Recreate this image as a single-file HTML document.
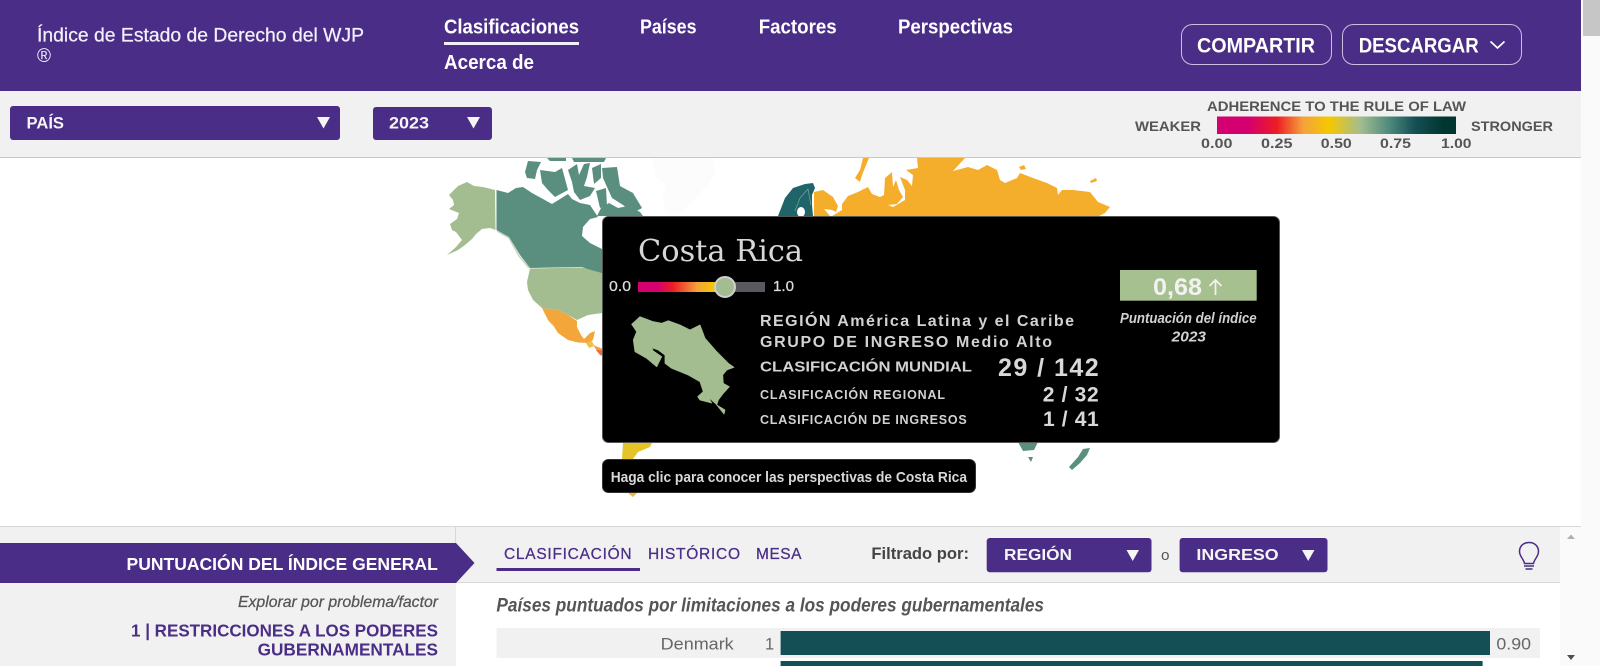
<!DOCTYPE html>
<html lang="es">
<head>
<meta charset="utf-8">
<title>Índice de Estado de Derecho del WJP</title>
<style>
html,body{margin:0;padding:0;background:#fff;overflow:hidden;width:1600px;height:666px}
svg{display:block}
text{font-family:"Liberation Sans",sans-serif}
.m{stroke:currentColor;stroke-width:.5px}
.s{stroke:currentColor;stroke-width:.25px}
.serif{font-family:"DejaVu Serif",serif}
</style>
</head>
<body>
<svg xmlns="http://www.w3.org/2000/svg" width="1600" height="666" viewBox="0 0 1600 666">
<defs>
<linearGradient id="lg"><stop offset="0" stop-color="#d4006f"/><stop offset=".13" stop-color="#d4006f"/><stop offset=".25" stop-color="#ee1c25"/><stop offset=".36" stop-color="#f4a23c"/><stop offset=".47" stop-color="#f5c800"/><stop offset=".6" stop-color="#a3bd90"/><stop offset=".72" stop-color="#4f8a7c"/><stop offset=".83" stop-color="#134f55"/><stop offset=".95" stop-color="#003530"/><stop offset="1" stop-color="#003530"/></linearGradient>
<linearGradient id="sl"><stop offset="0" stop-color="#d4006f"/><stop offset=".22" stop-color="#d4006f"/><stop offset=".4" stop-color="#ee1c25"/><stop offset=".68" stop-color="#f4a23c"/><stop offset=".88" stop-color="#f5c800"/><stop offset="1" stop-color="#e0c840"/></linearGradient>
</defs>

<!-- page base and scrollbar -->
<rect width="1600" height="666" fill="#fff"/>
<rect x="1581" width="19" height="666" fill="#fafafa"/>
<rect x="1583" width="17" height="36" fill="#c6c6c6"/>

<!-- header -->
<rect width="1581" height="91" fill="#4a2d87"/>
<g fill="#f3effa" color="#f3effa">
<text class="s" x="37" y="41.5" font-size="19" textLength="327" lengthAdjust="spacingAndGlyphs">Índice de Estado de Derecho del WJP</text>
<text x="37" y="62" font-size="19">®</text>
</g>
<g fill="#fff" font-size="20" font-weight="bold">
<text x="444" y="33.5" textLength="135" lengthAdjust="spacingAndGlyphs">Clasificaciones</text>
<rect x="444" y="42" width="135" height="3" fill="#f3effa"/>
<text x="444" y="69" textLength="90" lengthAdjust="spacingAndGlyphs">Acerca de</text>
<text x="640" y="33.5" textLength="56.5" lengthAdjust="spacingAndGlyphs">Países</text>
<text x="758.7" y="33.5" textLength="78" lengthAdjust="spacingAndGlyphs">Factores</text>
<text x="898" y="33.5" textLength="115" lengthAdjust="spacingAndGlyphs">Perspectivas</text>
</g>
<rect x="1181.5" y="24.5" width="150" height="40" rx="11" fill="none" stroke="#cbbfe0"/>
<rect x="1342.5" y="24.5" width="179" height="40" rx="11" fill="none" stroke="#cbbfe0"/>
<g fill="#fff" font-size="21" font-weight="bold">
<text x="1197" y="52.3" textLength="118" lengthAdjust="spacingAndGlyphs">COMPARTIR</text>
<text x="1358.7" y="52.3" textLength="120" lengthAdjust="spacingAndGlyphs">DESCARGAR</text>
</g>
<path d="M1490.5 41.5L1497.5 48L1504.5 41.5" fill="none" stroke="#fff" stroke-width="1.7"/>

<!-- filter row -->
<rect y="91" width="1581" height="66" fill="#f1f1f1"/>
<rect y="157" width="1581" height="1" fill="#c8c8c8"/>
<rect x="10" y="106" width="330" height="34" rx="3" fill="#4a2d87"/>
<rect x="373" y="107" width="119" height="33" rx="3" fill="#4a2d87"/>
<g fill="#f5f5f5" font-size="16.5" font-weight="bold">
<text x="26.5" y="128.3" textLength="37.5" lengthAdjust="spacingAndGlyphs">PAÍS</text>
<text x="389" y="128.3" textLength="40" lengthAdjust="spacingAndGlyphs">2023</text>
</g>
<path d="M317 117H330L323.500 128.500Z M467 117H480L473.500 128.500Z" fill="#f5f5f5"/>

<!-- legend -->
<g fill="#555" font-size="14" font-weight="bold">
<text x="1207" y="111" textLength="259" lengthAdjust="spacingAndGlyphs">ADHERENCE TO THE RULE OF LAW</text>
<text x="1135" y="131" textLength="66" lengthAdjust="spacingAndGlyphs">WEAKER</text>
<text x="1471" y="131" textLength="82" lengthAdjust="spacingAndGlyphs">STRONGER</text>
<text x="1201" y="148" textLength="31.500" lengthAdjust="spacingAndGlyphs">0.00</text>
<text x="1261" y="148" textLength="31.500" lengthAdjust="spacingAndGlyphs">0.25</text>
<text x="1320.800" y="148" textLength="31" lengthAdjust="spacingAndGlyphs">0.50</text>
<text x="1380" y="148" textLength="31" lengthAdjust="spacingAndGlyphs">0.75</text>
<text x="1441" y="148" textLength="30.500" lengthAdjust="spacingAndGlyphs">1.00</text>
</g>
<rect x="1217" y="116.500" width="239" height="17.500" fill="url(#lg)"/>

<!-- map -->
<g>
<!-- Greenland -->
<path d="M653 158H712L716 172L708 185L700 192L692 203L678 216L666 212L662 198L666 186L656 176Z" fill="#fcfcfc"/>
<!-- Alaska -->
<path d="M449 195L458 186L467 182L474 186L483 187L495 190L495.500 230L490 228L482 229L476 234L472 239L465 245L458 250L447 255L456 247L462 240L456 232L452 230L450 224L457 219L459 213L449 209L454 205L453 200Z" fill="#a3bd90"/>
<path d="M497 231L509 238L519 256L529 268" fill="none" stroke="#c7d8bb" stroke-width="1.5"/>
<!-- Canada -->
<g fill="#5a8f80">
<path d="M496.500 190L508 193L516 188L523 187L532 193L543 199L552 204L560 199L568 194L572 199L580 203L590 205L598 217L590 219L583 227L582 236L590 243L602 249L612 250V275H602L582 267L530 268L520 255L509 237L496.500 230Z"/>
<path d="M525 172L528 161L541 162L537 170L535 179L527 178Z"/>
<path d="M540 170L555 172L562 168L568 190L555 197L548 190L542 183Z"/>
<path d="M568 170L577 164L579 175L584 164L590 163L587 177L584 186L595 188L590 196L580 200L574 192L572 182Z"/>
<path d="M592 168L601 164L601 178L594 184Z"/>
<path d="M602 168L617 167L620 186L633 193L642 208L633 213L623 205L612 198L607 187L603 178Z"/>
<path d="M596 191L606 188L607 206L600 208Z"/>
<path d="M597 216L601 208L609 203L618 208L628 206L640 212L643 216Z"/>
<path d="M547 158H566V161H550Z M572 158H606L604 162H574Z"/>
</g>
<!-- Mexico + Central America -->
<path d="M542 308L550 309L558 310L568 315L577 321L577 327L581 335L584 339L590 333L595 331L593 340L588 343L578 342.500L568 340L558 333L551 322L546 313Z" fill="#f3a63a"/>
<path d="M542 308L546 311L553 326L548 320Z" fill="#f3a63a"/>
<path d="M586 343L592 341L594 346L589 348Z" fill="#eec04a"/>
<path d="M593 345L603 349V353L597 351Z" fill="#f0a040"/>
<path d="M596 350L603 350V356L600 355Z" fill="#e8703a"/>
<!-- USA -->
<path d="M530 268.500L582 267.500L602 273L612 273V313H602L588 315L577 320L570 316L558 310L550 309L542 308L533 300L528 290L527 282Z" fill="#a3bd90"/>
<!-- Scandinavia -->
<path d="M778 216L785 198L793 188L805 184L813 183L815 188L812 195L812 205L813 216Z" fill="#1f6468"/>
<ellipse cx="801" cy="212" rx="4" ry="5" fill="#fff"/>
<path d="M808 189L800 198L795 211M808 189L811 205" fill="none" stroke="#7ba7a6" stroke-width=".7"/>
<!-- Russia -->
<g fill="#f4ae2c">
<path d="M814 192L823 190L833 197L838 206L836 212L832 210L824 209L830 216H814Z"/>
<path d="M832 216L842 210L842 204L848 196L858 192L868 187L872 194L880 197L884 195L885 178L892 172L893 187L896 180L899 190L903 197L897 204L888 205L893 207L905 200L905 190L900 177L907 180L912 186L913 175L906 170L918 168L917 158H965L953 171L968 167L978 170L987 165L997 170L1000 180L1005 183L1017 178L1020 173L1033 178L1047 183L1057 188L1058 195L1062 190L1073 190L1090 192L1098 202L1110 207L1105 213L1097 217Z"/>
<path d="M863 158H869L862 175L860 182L855 178L860 170Z"/>
<path d="M1090 181L1096 178L1097 181L1091 183Z"/>
<path d="M1019 167L1024 165L1026 169L1021 170Z"/>
</g>
<!-- South America bits -->
<path d="M623 443H652L650 447L638 452L633 459H622Z" fill="#e3c528"/>
<path d="M628 493H637L633 497Z" fill="#f0b84a"/>
<!-- Oceania -->
<g fill="#5a8f80">
<path d="M1018 442H1038L1034 450L1023 451Z"/>
<path d="M1028 457H1033L1031 462Z"/>
<path d="M1083 449L1090 448L1087 455L1080 463L1072 470L1069 467L1078 457Z"/>
</g>
</g>

<!-- main tooltip -->
<rect x="602.500" y="216.500" width="677" height="226" rx="6" fill="#000" stroke="#555"/>
<text class="serif" x="638" y="261" font-size="30" fill="#d6d6d6" textLength="165" lengthAdjust="spacingAndGlyphs">Costa Rica</text>
<g fill="#dcdcdc" color="#dcdcdc" font-size="14.500">
<text class="s" x="609" y="291" textLength="22" lengthAdjust="spacingAndGlyphs">0.0</text>
<text class="s" x="773" y="291" textLength="21" lengthAdjust="spacingAndGlyphs">1.0</text>
</g>
<rect x="725" y="282" width="40" height="10" fill="#59595f"/>
<rect x="638" y="282" width="87" height="10" fill="url(#sl)"/>
<circle cx="725" cy="287" r="10" fill="#a3bd90" stroke="#cfcfcf" stroke-width="2"/>
<path d="M631.700 324.300L640 316.700L653.300 321.700L661.700 323.300L668.300 320.700L680 325L690 330L700 325L705 338.300L716.700 351.700L728.300 363.300L734 367.300L726.700 370L722.700 375L723.300 383.300L729.300 386.700L723.300 393.300L718.300 400L716.700 405L725 410L724 414L716 404L708 397L711.700 403L700 400L697.700 396.700L703.300 391.700L700 381.700L688.300 375L671.700 368.300L665 363.300L665 355L658.300 350L651.700 347.700L653.300 351L661.700 356.700L656.700 366.700L646.700 358.300L635 351.700L633.300 340L636.700 331.700Z" fill="#a3bd90" stroke="#a3bd90" stroke-width=".8" stroke-linejoin="round"/>
<g fill="#d2d2d2" font-weight="bold">
<text x="760" y="326" font-size="16" textLength="314">REGIÓN América Latina y el Caribe</text>
<text x="760" y="347" font-size="16" textLength="292">GRUPO DE INGRESO Medio Alto</text>
<text x="760" y="371.700" font-size="15" textLength="212" lengthAdjust="spacingAndGlyphs">CLASIFICACIÓN MUNDIAL</text>
<text x="760" y="399" font-size="12.500" textLength="185">CLASIFICACIÓN REGIONAL</text>
<text x="760" y="424" font-size="12.500" textLength="206.700">CLASIFICACIÓN DE INGRESOS</text>
</g>
<g fill="#d8d8d8" font-weight="bold">
<text x="998" y="376" font-size="25" textLength="100.700">29 / 142</text>
<text x="1042.700" y="401.700" font-size="21" textLength="56">2 / 32</text>
<text x="1043" y="426" font-size="21" textLength="55.700">1 / 41</text>
</g>
<rect x="1120" y="270" width="136.700" height="30.700" fill="#a7c08f"/>
<text x="1153" y="295" font-size="24" font-weight="bold" fill="#f2f2f2" textLength="49" lengthAdjust="spacingAndGlyphs">0,68</text>
<path d="M1215.500 295V280M1209.500 286L1215.500 280L1221.500 286" fill="none" stroke="#f2f2f2" stroke-width="1.700"/>
<g fill="#d2d2d2" font-size="14.500" font-style="italic" font-weight="bold">
<text x="1120" y="323" textLength="136.600" lengthAdjust="spacingAndGlyphs">Puntuación del índice</text>
<text x="1171.700" y="341.700" textLength="34.300" lengthAdjust="spacingAndGlyphs">2023</text>
</g>

<!-- click hint -->
<rect x="602.500" y="459.500" width="373" height="33" rx="6" fill="#000" stroke="#333"/>
<text x="610.700" y="482" font-size="15" font-weight="bold" fill="#d8d8d8" textLength="356.300" lengthAdjust="spacingAndGlyphs">Haga clic para conocer las perspectivas de Costa Rica</text>

<!-- bottom left panel -->
<rect y="526" width="456" height="140" fill="#f1f1f1"/>
<rect y="526" width="1581" height="1" fill="#d8d8d8"/>

<!-- bottom right header -->
<rect x="456" y="527" width="1104" height="55" fill="#f1f1f1"/>
<rect x="456" y="582" width="1104" height="1" fill="#d8d8d8"/>
<rect x="455" y="527" width="1" height="16" fill="#d8d8d8"/>
<rect x="1560" y="527" width="21" height="139" fill="#fafafa"/>
<path d="M1567 539L1571 534.500L1575 539Z" fill="#b0b0b0"/>
<path d="M1567 655H1575L1571 660Z" fill="#505050"/>

<!-- section band -->
<path d="M0 543H456L474.500 563L456 583H0Z" fill="#4a2d87"/>
<text x="126.500" y="570" font-size="17.500" fill="#fff" font-weight="bold" textLength="311.300" lengthAdjust="spacingAndGlyphs">PUNTUACIÓN DEL ÍNDICE GENERAL</text>
<text class="s" x="238" y="607" font-size="16" font-style="italic" fill="#555" color="#555" textLength="200" lengthAdjust="spacingAndGlyphs">Explorar por problema/factor</text>
<g fill="#4a2d87" font-size="17.500" font-weight="bold">
<text x="131" y="636.700" textLength="307" lengthAdjust="spacingAndGlyphs">1 | RESTRICCIONES A LOS PODERES</text>
<text x="257.600" y="655.700" textLength="180.400" lengthAdjust="spacingAndGlyphs">GUBERNAMENTALES</text>
</g>

<g fill="#4a2d87" color="#4a2d87" font-size="15.500">
<text class="s" x="504" y="559" textLength="127.600">CLASIFICACIÓN</text>
<text class="s" x="648" y="559" textLength="92">HISTÓRICO</text>
<text class="s" x="756" y="559" textLength="45.500">MESA</text>
</g>
<rect x="496.500" y="568" width="143.500" height="3" fill="#4a2d87"/>
<text x="871.400" y="559" font-size="16.500" font-weight="bold" fill="#444" textLength="97.600" lengthAdjust="spacingAndGlyphs">Filtrado por:</text>
<rect x="986.700" y="538" width="164.800" height="34.300" rx="3" fill="#4a2d87"/>
<rect x="1179.600" y="538" width="147.900" height="34.300" rx="3" fill="#4a2d87"/>
<g fill="#f5f5f5" font-size="16" font-weight="bold">
<text x="1004" y="560" textLength="68" lengthAdjust="spacingAndGlyphs">REGIÓN</text>
<text x="1196.400" y="560" textLength="82.200" lengthAdjust="spacingAndGlyphs">INGRESO</text>
</g>
<path d="M1126.500 550H1139L1132.700 561Z M1302 550H1314.500L1308.200 561Z" fill="#f5f5f5"/>
<text x="1161" y="560" font-size="15" fill="#555" textLength="8.500" lengthAdjust="spacingAndGlyphs">o</text>
<path d="M1524.500 563.500C1523.500 558.500 1519.500 556.500 1519.500 551.500C1519.500 546 1523.500 542.500 1529 542.500C1534.500 542.500 1538.500 546 1538.500 551.500C1538.500 556.500 1534.500 558.500 1533.500 563.500Z" fill="none" stroke="#4a2d87" stroke-width="1.500"/>
<path d="M1524 566H1534M1525.500 569H1532.500" fill="none" stroke="#4a2d87" stroke-width="1.500"/>

<!-- chart -->
<text x="496.400" y="611.700" font-size="19" font-style="italic" font-weight="bold" fill="#555" textLength="547.600" lengthAdjust="spacingAndGlyphs">Países puntuados por limitaciones a los poderes gubernamentales</text>
<rect x="496.500" y="628" width="1043.500" height="30" fill="#f1f1f1"/>
<text x="660.700" y="649.300" font-size="16.500" fill="#666" textLength="73" lengthAdjust="spacingAndGlyphs">Denmark</text>
<text x="765" y="649.300" font-size="16.500" fill="#666">1</text>
<rect x="780.600" y="631" width="709.400" height="24" fill="#134f55"/>
<text x="1496.400" y="649.300" font-size="16.500" fill="#666" textLength="34.600" lengthAdjust="spacingAndGlyphs">0.90</text>
<rect x="780.600" y="661" width="702" height="5" fill="#134f55"/>
</svg>
</body>
</html>
